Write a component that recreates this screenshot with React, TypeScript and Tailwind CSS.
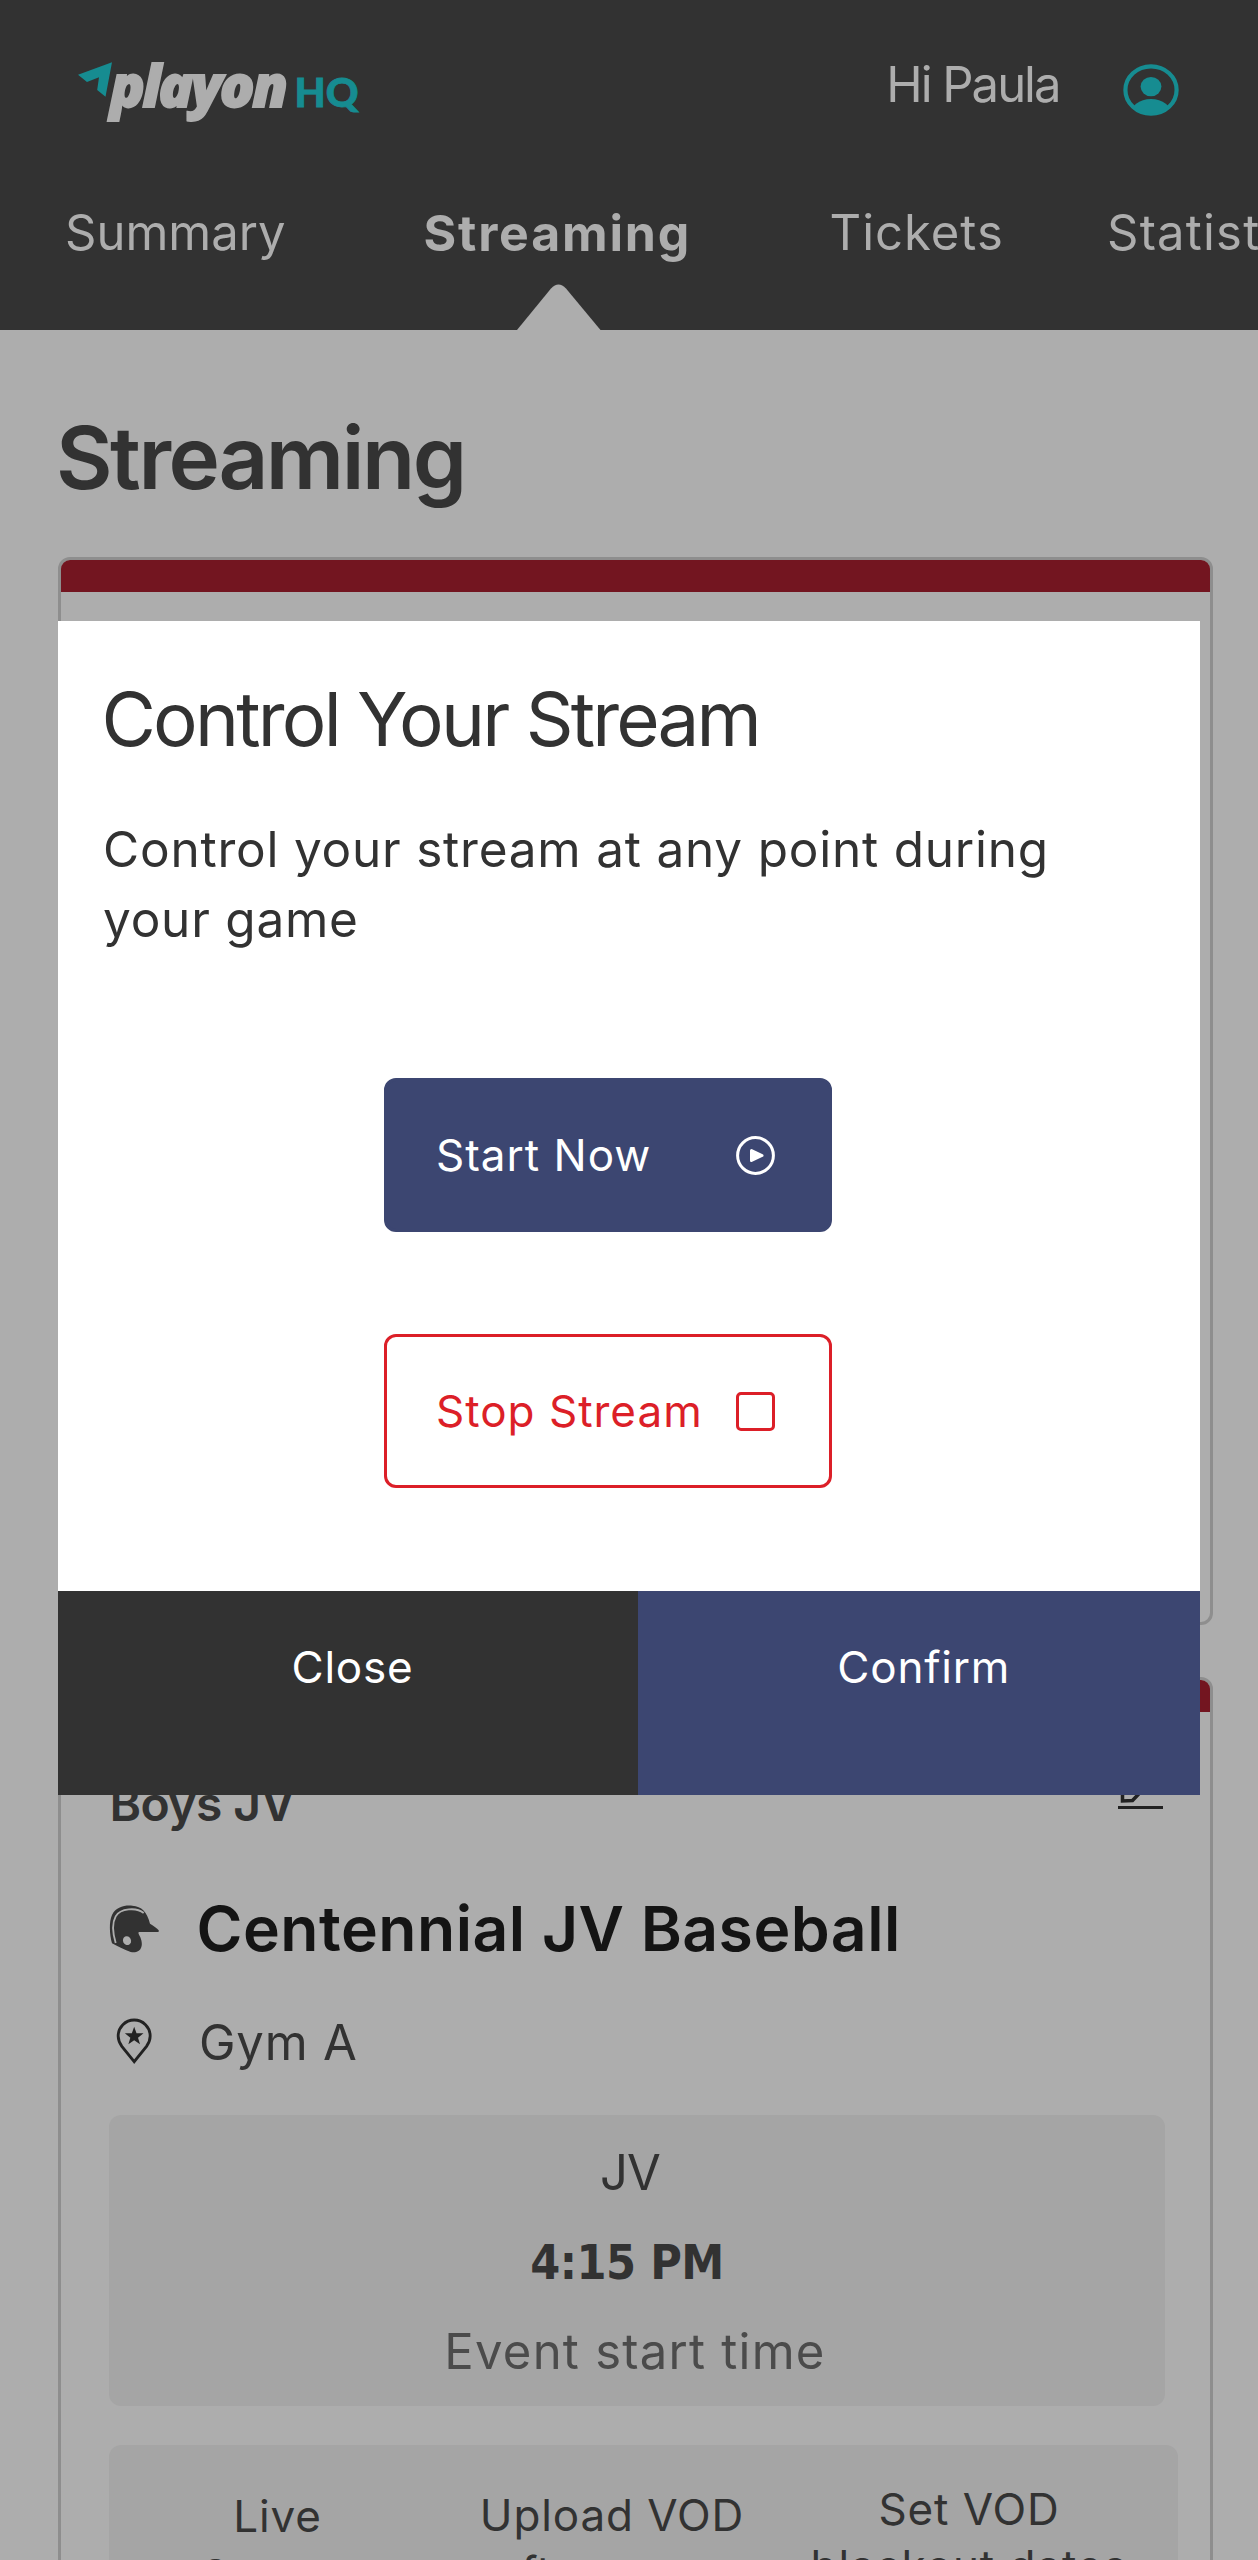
import type { ReactNode } from "react";

function Logo() {
  return (
    <svg className="mt-2 shrink-0" width="284" height="66" viewBox="78 62 284 66" role="img" aria-label="playon HQ">
      <path d="M78 74.7 112 62.3 105.5 96.7 97.2 90 99 77.3 87 82Z" fill="#168c91" />
      <text
        x="110"
        y="107"
        fontFamily="Open Sans"
        fontWeight="800"
        fontStyle="italic"
        fontSize="57.5"
        fill="#adadad"
        stroke="#adadad"
        strokeWidth="1.8"
        textLength="178"
        lengthAdjust="spacing"
      >
        playon
      </text>
      <text
        x="294.5"
        y="107"
        fontFamily="Lato"
        fontWeight="900"
        fontSize="40.5"
        fill="#168c91"
        stroke="#168c91"
        strokeWidth="0.8"
        textLength="64"
        lengthAdjust="spacingAndGlyphs"
      >
        HQ
      </text>
    </svg>
  );
}

function Avatar() {
  return (
    <svg className="mt-[10px] shrink-0" width="56" height="52" viewBox="0 0 56 52">
      <defs>
        <clipPath id="avatar-clip">
          <ellipse cx="28" cy="26" rx="26" ry="24" />
        </clipPath>
      </defs>
      <ellipse cx="28" cy="26" rx="25.6" ry="23.7" fill="none" stroke="#168c91" strokeWidth="4.2" />
      <ellipse cx="28" cy="22.6" rx="10.4" ry="9.7" fill="#168c91" />
      <ellipse cx="28" cy="51" rx="21" ry="16" fill="#168c91" clipPath="url(#avatar-clip)" />
    </svg>
  );
}

function Helmet() {
  return (
    <svg width="50.7" height="48" viewBox="40 46 152 144">
      <path
        d="M49 161C42 138 39 98 49 76 60 53 84 46 110 48c28 2 44 18 53 54 12 7 21 14 26 20 1 3 0 5-3 5h-55c-6 0-1 8 3 16 4 10 6 20 3 29-4 14-18 18-32 15C85 181 65 169 49 161Z"
        fill="#323232"
      />
      <path d="M60 160C51 130 50 98 60 80c14-24 62-28 84-10" fill="none" stroke="#adadad" strokeWidth="5.5" />
      <ellipse cx="94" cy="153" rx="12" ry="13.5" transform="rotate(-25 94 153)" fill="#adadad" />
    </svg>
  );
}

function Pin() {
  return (
    <svg width="36.7" height="46" viewBox="63.5 385 110 138">
      <path
        d="M118 516 81 470C74 460 70 450 70 439a48 48 0 0 1 96 0c0 11-4 21-11 31Z"
        fill="none"
        stroke="#222222"
        strokeWidth="8.5"
      />
      <path
        d="M118 411l7 19.500 21 .5-16.500 13 6 20L118 452l-17.500 12 6-20L90 431l21-.5Z"
        fill="#222222"
      />
    </svg>
  );
}

function Card({ className, children }: { className: string; children?: ReactNode }) {
  return (
    <section className={`w-[1155px] overflow-hidden rounded-[12px] border-[3px] border-[#8e8e8e] bg-[#adadad] ${className}`}>
      <div className="h-8 bg-[#731520]" />
      {children}
    </section>
  );
}

function Header() {
  return (
    <header className="relative h-[330px] overflow-hidden bg-[#323232] pt-[54px] text-[#adadad]">
      <div className="flex h-[70px] items-start justify-between pr-[79.5px] pl-[78px]">
        <Logo />
        <div className="flex items-start gap-[63px]">
          <span className="mt-px text-[49px] leading-[60px] tracking-[-2px]">Hi Paula</span>
          <Avatar />
        </div>
      </div>
      <nav className="mt-[79px] flex pl-[65px] text-[49px] leading-[60px] whitespace-nowrap">
        <a className="w-[358.500px] shrink-0">Summary</a>
        <a className="w-[406px] shrink-0 text-[50px] font-bold tracking-[1.8px]">Streaming</a>
        <a className="w-[277.500px] shrink-0 tracking-[1px]">Tickets</a>
        <a className="shrink-0 tracking-[1.2px]">Statistics</a>
      </nav>
      <svg className="absolute bottom-0 left-[517px]" width="84" height="46" viewBox="0 0 84 46">
        <path d="M0 46 34 4.500Q41.500-3.500 49 4.500L83.500 46Z" fill="#adadad" />
      </svg>
    </header>
  );
}

function EventCard() {
  return (
    <Card className="mt-[52px] h-[960px]">
      <div className="flex items-start justify-between pt-[61.500px] pr-[47px] pl-[48.500px]">
        <h3 className="text-[48px] leading-[60px] font-semibold tracking-[-0.6px] text-[#323232]">Boys JV</h3>
        <svg className="-mt-1" width="45" height="39" viewBox="0 0 45 39">
          <path d="M4.500 31V20L24 2l9 9L14.500 30.500Z" fill="none" stroke="#222222" strokeWidth="3.500" />
          <path d="M0 37.500H45" stroke="#222222" strokeWidth="3" />
        </svg>
      </div>
      <div className="mt-[57.500px] flex h-[76px] items-start pl-[47.500px]">
        <div className="w-[88px] pt-[14px]">
          <Helmet />
        </div>
        <h2 className="text-[62.400px] leading-[76px] font-semibold tracking-[0.5px] text-[#141414]">
          Centennial JV Baseball
        </h2>
      </div>
      <div className="mt-[46px] flex h-[60px] items-start pl-[55px]">
        <div className="w-[83px] pt-[5px]">
          <Pin />
        </div>
        <p className="text-[49px] leading-[60px] tracking-[0.8px] text-[#323232]">Gym A</p>
      </div>
      <div className="mt-[42px] ml-[48px] h-[291px] w-[1056px] rounded-[12px] bg-[#a5a5a5] pt-[28px] text-center text-[49px] leading-[60px] text-[#323232]">
        <p className="pr-[14px] tracking-[-0.77px]">JV</p>
        <p className="mt-[29px] pr-[20px] font-['DejaVu_Sans_Condensed'] text-[48px] font-bold tracking-[-0.5px]">
          4:15 PM
        </p>
        <p className="mt-[29.500px] pr-[4px] tracking-[1.24px] text-[#4b4b4b]">Event start time</p>
      </div>
      <div className="mt-[39px] ml-[48px] flex h-[200px] w-[1069px] rounded-[12px] bg-[#a5a5a5] text-center text-[44px] leading-[57px] tracking-[0.9px] text-[#323232]">
        <p className="w-[337px] pt-[42px] leading-[59px]">
          Live
          <br />
          Stream
        </p>
        <p className="w-[332px] pt-[42px]">
          Upload VOD
          <br />
          after game
        </p>
        <p className="w-[382px] pt-[36px]">
          Set VOD
          <br />
          blackout dates
        </p>
      </div>
    </Card>
  );
}

function StreamDialog() {
  return (
    <div
      role="dialog"
      className="absolute top-[620.500px] left-[57.500px] flex h-[1174.500px] w-[1142.500px] flex-col bg-white text-[#323232]"
    >
      <div className="grow pt-[53px]">
        <h2 className="pl-[44px] text-[74.500px] leading-[90px] tracking-[-2.8px]">Control Your Stream</h2>
        <p className="mt-[50px] pl-[45.500px] text-[49.500px] leading-[70.800px] tracking-[0.78px]">
          Control your stream at any point during
          <br />
          your game
        </p>
        <div className="mt-[122.600px] ml-[326.500px] flex w-[448px] flex-col gap-[102px] text-[44px] leading-[56px] tracking-[1px]">
          <button className="flex h-[154px] items-start justify-between rounded-[12px] border-[3px] border-[#3c4671] bg-[#3c4671] pt-[46px] pr-[54px] pl-[49px] text-white">
            Start Now
            <svg className="mt-[9px]" width="39" height="39" viewBox="0 0 39 39">
              <circle cx="19.500" cy="19.500" r="17.900" fill="none" stroke="currentColor" strokeWidth="3" />
              <path
                d="M15.500 14.500 26 19.500 15.500 24.500Z"
                fill="currentColor"
                stroke="currentColor"
                strokeWidth="3"
                strokeLinejoin="round"
              />
            </svg>
          </button>
          <button className="flex h-[154px] items-start justify-between rounded-[12px] border-[3px] border-[#dc1f28] bg-white pt-[46px] pr-[54px] pl-[49px] text-[#dc1f28]">
            Stop Stream
            <span className="mt-[9px] size-[39px] rounded-[5px] border-[3px] border-[#dc1f28]" />
          </button>
        </div>
      </div>
      <div className="flex h-[204.500px] text-[44px] leading-[56px] tracking-[0.8px] text-white">
        <button className="flex w-[580px] justify-center bg-[#323232] pt-[48.500px] pl-[10px]">Close</button>
        <button className="flex grow justify-center bg-[#3c4671] pt-[48.500px] pl-[10px]">Confirm</button>
      </div>
    </div>
  );
}

export default function App() {
  return (
    <div className="relative h-[2560px] w-[1258px] overflow-hidden bg-[#adadad] font-['Inter',sans-serif]">
      <Header />
      <main className="pt-[75.500px] pl-[58px]">
        <h1 className="-ml-[2px] text-[87px] leading-[104px] font-semibold tracking-[-2.46px] text-[#323232]">
          Streaming
        </h1>
        <Card className="mt-[47.500px] h-[1068px]" />
        <EventCard />
      </main>
      <StreamDialog />
    </div>
  );
}
